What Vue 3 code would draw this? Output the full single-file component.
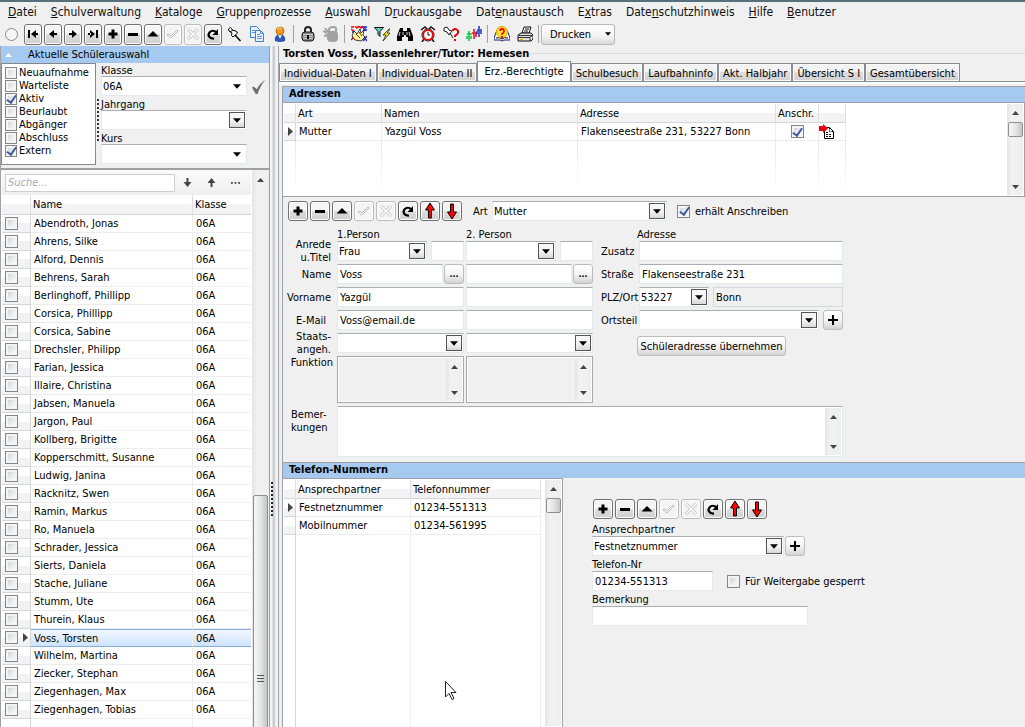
<script setup>
import { ref, reactive } from 'vue'

const menu = [
  ['', 'D', 'atei'], ['', 'S', 'chulverwaltung'], ['', 'K', 'ataloge'], ['', 'G', 'ruppenprozesse'],
  ['', 'A', 'uswahl'], ['D', 'r', 'uckausgabe'], ['Dat', 'e', 'naustausch'], ['E', 'x', 'tras'],
  ['Date', 'n', 'schutzhinweis'], ['', 'H', 'ilfe'], ['', 'B', 'enutzer']
]
const navigator = [
  ['first', 'Erster'], ['prev', 'Zurück'], ['next', 'Weiter'], ['last', 'Letzter'], ['plus', 'Neu'],
  ['minus', 'Löschen'], ['edit', 'Bearbeiten'], ['ok', 'Speichern'], ['cancel', 'Abbrechen'], ['reload', 'Aktualisieren']
]
const editor = [
  ['plus', 'Neu'], ['minus', 'Löschen'], ['edit', 'Bearbeiten'], ['ok', 'Speichern'], ['cancel', 'Abbrechen'],
  ['reload', 'Aktualisieren'], ['up', 'Nach oben'], ['down', 'Nach unten']
]
const tools = [
  [['pin', 'Anheften'], ['copy', 'Kopieren'], ['person', 'Person']],
  [['lock', 'Sperren'], ['unlock', 'Entsperren']],
  [['group', 'Gruppe'], ['filter', 'Filter'], ['binoculars', 'Suchen'], ['clock', 'Termine'], ['pinhelp', 'Vermerke'], ['people', 'Personen']],
  [['book', 'Hilfe'], ['printer', 'Drucker']]
]
const isOff = (id) => id === 'ok' || id === 'cancel'

const status = reactive([
  { name: 'Neuaufnahme', on: false }, { name: 'Warteliste', on: false }, { name: 'Aktiv', on: true },
  { name: 'Beurlaubt', on: false }, { name: 'Abgänger', on: false }, { name: 'Abschluss', on: false },
  { name: 'Extern', on: true }
])
const students = [
  'Abendroth, Jonas', 'Ahrens, Silke', 'Alford, Dennis', 'Behrens, Sarah', 'Berlinghoff, Phillipp',
  'Corsica, Phillipp', 'Corsica, Sabine', 'Drechsler, Philipp', 'Farian, Jessica', 'Illaire, Christina',
  'Jabsen, Manuela', 'Jargon, Paul', 'Kollberg, Brigitte', 'Kopperschmitt, Susanne', 'Ludwig, Janina',
  'Racknitz, Swen', 'Ramin, Markus', 'Ro, Manuela', 'Schrader, Jessica', 'Sierts, Daniela',
  'Stache, Juliane', 'Stumm, Ute', 'Thurein, Klaus', 'Voss, Torsten', 'Wilhelm, Martina',
  'Ziecker, Stephan', 'Ziegenhagen, Max', 'Ziegenhagen, Tobias'
]
const selected = ref('Voss, Torsten')
const tabs = [
  'Individual-Daten I', 'Individual-Daten II', 'Erz.-Berechtigte', 'Schulbesuch', 'Laufbahninfo',
  'Akt. Halbjahr', 'Übersicht S I', 'Gesamtübersicht'
]
const activeTab = ref('Erz.-Berechtigte')
const phones = [['Festnetznummer', '01234-551313'], ['Mobilnummer', '01234-561995']]
</script>

<template>
  <div class="app">
    <svg class="defs" aria-hidden="true">
      <symbol id="first" viewBox="0 0 14 14"><path d="M2 3h2v8H2zM10 3v8L5 7zM9 6h3v2H9z" /></symbol>
      <symbol id="prev" viewBox="0 0 14 14"><path d="M8 3v8L3 7zM8 6h3v2H8z" /></symbol>
      <symbol id="next" viewBox="0 0 14 14"><path d="M6 3v8l5-4zM3 6h3v2H3z" /></symbol>
      <symbol id="last" viewBox="0 0 14 14"><path d="M10 3h2v8h-2zM4 3v8l5-4zM2 6h3v2H2z" /></symbol>
      <symbol id="plus" viewBox="0 0 14 14"><path d="M5.5 2.5h3v3h3v3h-3v3h-3v-3h-3v-3h3z" /></symbol>
      <symbol id="minus" viewBox="0 0 14 14"><path d="M2 6h10v3H2z" /></symbol>
      <symbol id="edit" viewBox="0 0 14 14"><path d="M7 4l5.500 5.500h-11z" /></symbol>
      <symbol id="ok" viewBox="0 0 14 14"><path d="M1 8l2-1 2 2 6-6 1 1-7 7z" fill="#fff" stroke="#bdbdbd" /></symbol>
      <symbol id="cancel" viewBox="0 0 14 14"><path d="M2 2l10 10M12 2L2 12" stroke="#bdbdbd" stroke-width="3" /><path d="M2 2l10 10M12 2L2 12" stroke="#fff" stroke-width="1.500" /></symbol>
      <symbol id="reload" viewBox="0 0 14 14"><path d="M8 11.500C3 12 1.500 8 3.500 5.500c2-2.500 5-2 6.500-.5" fill="none" stroke="#000" stroke-width="2.200" /><path d="M12 2v6H6.500z" /></symbol>
      <symbol id="up" viewBox="0 0 14 18"><path d="M7 1l4.500 7H8.500v8h-3V8h-3z" fill="#f00" stroke="#000" /></symbol>
      <symbol id="down" viewBox="0 0 14 18"><path d="M7 17l4.500-7H8.500V2h-3v8h-3z" fill="#f00" stroke="#000" /></symbol>
      <symbol id="pin" viewBox="0 0 16 16"><path d="M9 9l5.500 6" stroke="#000" stroke-width="1.500" /><path d="M2.500 3l2-1.500 2.500 3 3 .5 1.500 2-4.500 4-1.500-1.500.5-2.500-3-2z" fill="#fff" stroke="#000" /><path d="M4 6l3-2" stroke="#000" /></symbol>
      <symbol id="copy" viewBox="0 0 16 16"><path d="M1.500.5h6l3 3v8h-9z" fill="#eaf3ff" stroke="#3f7fca" /><path d="M6.500 4.500h5l3 3v8h-8z" fill="#eaf3ff" stroke="#3f7fca" /><path d="M11.500 4.500v3h3M8 8.500h3M8 10.500h5M8 12.500h5M3 4.500h3M3 6.500h3" fill="none" stroke="#5794da" /></symbol>
      <symbol id="person" viewBox="0 0 16 16"><path d="M3 15c-1-4 2-7 5-7s6 3 5 7q-5 2-10 0z" fill="#2957b4" /><path d="M6 9h4l-2 4z" fill="#dcecff" /><circle cx="8" cy="5" r="4" fill="#f49b25" stroke="#c36d09" /><path d="M5 3q3-3 5 0" fill="none" stroke="#ffe18a" /></symbol>
      <symbol id="lock" viewBox="0 0 16 16"><path d="M5 8V4q0-3 3-3t3 3v4" fill="none" stroke="#222" stroke-width="2" /><rect x="2" y="6" width="12" height="9" rx="3" fill="#888" stroke="#111" /><path d="M3 8.500h10M3 10.500h10M3 12.500h10" stroke="#c9c9c9" /><path d="M8 9v4" stroke="#111" stroke-width="2" /></symbol>
      <symbol id="unlock" viewBox="0 0 16 16"><path d="M6 7V4q0-3 4-3t3 3v3" fill="none" stroke="#a2a2a2" stroke-width="2" /><rect x="4" y="5" width="11" height="11" rx="4" fill="#a2a2a2" /><path d="M0 5l4 2M1 10l4-1M2 2l3 4" stroke="#a2a2a2" stroke-width="2" /></symbol>
      <symbol id="group" viewBox="0 0 16 16"><path d="M0 1h3M4 0l2 2 2-2 2 2 2-2M0 3l3 2M0 14l3-3" fill="none" stroke="#f00" stroke-width="1.500" /><path d="M1 6h3M11 1h5M12 4h4M14 1v4M12 10l4 5M16 10l-4 5M1 11h2" stroke="#1d2bd8" stroke-width="1.500" /><path d="M3 5l3 3 3-5 1 4 3-3-1 5 2 2-4 4-6-1-3-4z" fill="#fff39a" stroke="#111" stroke-width=".8" /><path d="M5 8l4 4M8 6l3 4" stroke="#111" stroke-width=".8" /><path d="M10 0l3 3" stroke="#f00" /></symbol>
      <symbol id="filter" viewBox="0 0 16 16"><path d="M.5 1.500h9l-3.500 4v5l-2-2v-3z" fill="#5bd0c9" stroke="#111" /><path d="M15 3l-6 6h3l-3 6 7-8h-3l3-4z" fill="#ffec00" stroke="#222" stroke-width=".8" /></symbol>
      <symbol id="binoculars" viewBox="0 0 16 16"><path d="M3 2h3v3h4V2h3l3 8v5h-5v-4H9V9H7v2H5v4H0v-5z" /><path d="M3 6L2 10M12 6l1 4M6 6v3M10 6v3" stroke="#d8d8d8" /></symbol>
      <symbol id="clock" viewBox="0 0 16 16"><path d="M1 4l4-3 2 2M15 4l-4-3-2 2M4 13l-2 3M12 13l2 3" fill="none" stroke="#111" stroke-width="1.500" /><circle cx="8" cy="9" r="6" fill="#fff" stroke="#111" /><circle cx="8" cy="9" r="4.800" fill="none" stroke="#f00" stroke-width="1.800" /><path d="M8 6v3h2" fill="none" stroke="#111" /></symbol>
      <symbol id="pinhelp" viewBox="0 0 16 16"><path d="M1 2l3-1 2 3 3 1-3 4-2-3-3-1zM7 7l3 5" fill="#fff" stroke="#222" /><path d="M10 5q0-2 2-2t3 2-3 5v1M12 13v2" fill="none" stroke="#e40000" stroke-width="2" /></symbol>
      <symbol id="people" viewBox="0 0 16 16"><path d="M3 5v3M1 8h5M3 8v7M1 10v3M5 10v3" stroke="#00c53d" stroke-width="1.500" /><path d="M8 3v3M6 7h5M8 7v6M10 7v4" stroke="#f00" stroke-width="1.500" /><path d="M13 0v3M11 4h5M13 4v7M11 5v3M15 5v3" stroke="#1830c4" stroke-width="1.500" /></symbol>
      <symbol id="book" viewBox="0 0 16 16"><path d="M3 4L0 12v2h6l2 1 2-1h6v-2l-3-8z" fill="#fff" stroke="#16226f" /><path d="M2 12q4-1 6 1 2-2 6-1" fill="none" stroke="#111" /><circle cx="8" cy="6" r="5.500" fill="#ffe82a" stroke="#d9a400" /><path d="M6 5q0-2 2-2t2 2-2 3v1M8 10v2" fill="none" stroke="#f00" stroke-width="1.800" /></symbol>
      <symbol id="printer" viewBox="0 0 16 16"><path d="M5 7l2-6h7l-2 6z" fill="#fff" stroke="#111" /><path d="M8 3h4M7 5h4" stroke="#111" /><path d="M1 9l3-2h10l2 2v4l-2 2H1z" fill="#e1e1e1" stroke="#111" /><path d="M1 11.500h12V15M2 9.500h13M13 11l3-2" fill="none" stroke="#333" /><path d="M3 13.500h3" stroke="#e0a800" /></symbol>
      <symbol id="tri-up" viewBox="0 0 7 4"><path d="M3.500 0L7 4H0z" /></symbol>
      <symbol id="tri-down" viewBox="0 0 7 4"><path d="M0 0h7L3.500 4z" /></symbol>
      <symbol id="tri-right" viewBox="0 0 5 9"><path d="M0 0l5 4.500L0 9z" fill="#444" /></symbol>
    </svg>

    <nav class="menu" aria-label="Hauptmenü">
      <a v-for="m in menu" :key="m.join('')" href="#">{{ m[0] }}<u>{{ m[1] }}</u>{{ m[2] }}</a>
    </nav>

    <div class="toolbar">
      <span class="lamp"></span>
      <div class="nav-buttons">
        <button v-for="b in navigator" :key="b[0]" class="tool narrow" :class="{ off: isOff(b[0]) }" :disabled="isOff(b[0])" :aria-label="b[1]">
          <svg><use :href="'#' + b[0]" /></svg>
        </button>
      </div>
      <div v-for="(g, i) in tools" :key="i" class="tool-group">
        <button v-for="t in g" :key="t[0]" class="flat" :aria-label="t[1]"><svg><use :href="'#' + t[0]" /></svg></button>
      </div>
      <button class="print">Drucken <svg><use href="#tri-down" /></svg></button>
    </div>

    <div class="body">
      <aside class="side">
        <h2 class="side-title"><svg><use href="#tri-up" /></svg>Aktuelle Schülerauswahl</h2>
        <div class="filters">
          <div class="status">
            <label v-for="s in status" :key="s.name"><input v-model="s.on" type="checkbox">{{ s.name }}</label>
          </div>
          <div class="grip-bar"></div>
          <div class="choices">
            <label for="f-klasse">Klasse</label>
            <div class="choice-row">
              <div class="pick plain"><select id="f-klasse"><option>06A</option></select><svg><use href="#tri-down" /></svg></div>
              <svg class="check" viewBox="0 0 16 15"><path d="M1 8l2-1 3 3q4-7 9-10Q9 8 7 15H5z" /></svg>
            </div>
            <label for="f-jahr">Jahrgang</label>
            <div class="pick"><select id="f-jahr"><option></option></select><svg><use href="#tri-down" /></svg></div>
            <label for="f-kurs">Kurs</label>
            <div class="pick plain"><select id="f-kurs"><option></option></select><svg><use href="#tri-down" /></svg></div>
          </div>
        </div>
        <div class="list">
          <div class="list-main">
            <div class="search">
              <input type="text" placeholder="Suche..." aria-label="Suche">
              <button aria-label="Weitersuchen"><svg viewBox="0 0 8 9"><path d="M3 0h2v4h3L4 9 0 4h3z" /></svg></button>
              <button aria-label="Rückwärts suchen"><svg viewBox="0 0 8 9"><path d="M3 9h2V5h3L4 0 0 5h3z" /></svg></button>
              <button aria-label="Mehr"><svg viewBox="0 0 10 9"><path d="M0 4h2v2H0zM4 4h2v2H4zM8 4h2v2H8z" /></svg></button>
            </div>
            <table class="students">
              <colgroup><col class="c-check"><col><col class="c-class"></colgroup>
              <thead><tr><th></th><th>Name</th><th>Klasse</th></tr></thead>
              <tbody>
                <tr v-for="s in students" :key="s" :class="{ current: s === selected }" @click="selected = s">
                  <td class="mark"><div><input type="checkbox" :aria-label="s"><svg v-if="s === selected"><use href="#tri-right" /></svg></div></td>
                  <td>{{ s }}</td><td>06A</td>
                </tr>
                <tr class="rest"><td></td><td></td><td></td></tr>
              </tbody>
            </table>
          </div>
          <div class="scroll tall">
            <svg><use href="#tri-up" /></svg>
            <div class="travel"></div>
            <div class="thumb"><i></i><i></i><i></i></div>
          </div>
        </div>
      </aside>
      <div class="splitter"><span></span></div>

      <main class="main">
        <h1><span>Torsten Voss, Klassenlehrer/Tutor: Hemesen</span></h1>
        <div class="tabs" role="tablist">
          <button v-for="t in tabs" :key="t" role="tab" :aria-selected="t === activeTab" :class="{ active: t === activeTab }" @click="activeTab = t">{{ t }}</button>
        </div>
        <div class="page">
          <h3>Adressen</h3>
          <div class="grid-box">
            <table class="addresses">
              <colgroup><col class="a0"><col class="a1"><col class="a2"><col class="a3"><col class="a4"><col class="a5"></colgroup>
              <thead><tr><th></th><th>Art</th><th>Namen</th><th>Adresse</th><th>Anschr.</th><th></th></tr></thead>
              <tbody>
                <tr>
                  <td class="mark"><svg><use href="#tri-right" /></svg></td><td>Mutter</td><td>Yazgül Voss</td>
                  <td>Flakenseestraße 231, 53227 Bonn</td>
                  <td class="mid"><input type="checkbox" checked aria-label="Anschreiben"></td>
                  <td class="doc"><svg viewBox="0 0 16 15"><path d="M5.500 3.500h5l4 4v7h-9z" fill="#fff" stroke="#000" /><path d="M10.500 3.500v4h4M7 8.500h2M7 10.500h6M7 12.500h6" fill="none" stroke="#000" stroke-dasharray="2 1" /><path d="M0 2h4V0l5 4.500L4 9V7H0z" fill="#e8000b" /></svg></td>
                </tr>
                <tr class="fade"><td v-for="n in 6" :key="n"></td></tr>
              </tbody>
            </table>
            <div class="scroll"><svg><use href="#tri-up" /></svg><div class="thumb small"></div><svg class="end"><use href="#tri-down" /></svg></div>
          </div>

          <form class="details" @submit.prevent>
            <div class="detail-bar">
              <div class="edit-buttons">
                <button v-for="b in editor" :key="b[0]" type="button" class="tool" :class="{ off: isOff(b[0]) }" :disabled="isOff(b[0])" :aria-label="b[1]"><svg><use :href="'#' + b[0]" /></svg></button>
              </div>
              <label for="art">Art</label>
              <div class="pick art"><select id="art"><option>Mutter</option></select><svg><use href="#tri-down" /></svg></div>
              <label class="tick"><input type="checkbox" checked>erhält Anschreiben</label>
            </div>
            <div class="forms">
              <div class="persons">
                <span></span><span class="head">1.Person</span><span class="head">2. Person</span>
                <label for="anrede" class="two">Anrede<br>u.Titel</label>
                <div class="pair"><div class="pick"><select id="anrede"><option>Frau</option></select><svg><use href="#tri-down" /></svg></div><input class="title" type="text" aria-label="Titel 1. Person"></div>
                <div class="pair"><div class="pick"><select aria-label="Anrede 2. Person"><option></option></select><svg><use href="#tri-down" /></svg></div><input class="title" type="text" aria-label="Titel 2. Person"></div>
                <label for="name">Name</label>
                <div class="pair tight"><input id="name" type="text" value="Voss"><button type="button" class="soft dots">...</button></div>
                <div class="pair tight"><input type="text" aria-label="Name 2. Person"><button type="button" class="soft dots">...</button></div>
                <label for="vorname">Vorname</label>
                <input id="vorname" type="text" value="Yazgül"><input type="text" aria-label="Vorname 2. Person">
                <label for="mail" class="inset">E-Mail</label>
                <input id="mail" type="text" value="Voss@email.de"><input type="text" aria-label="E-Mail 2. Person">
                <label for="staat" class="two">Staats-<br>angeh.</label>
                <div class="pick"><select id="staat"><option></option></select><svg><use href="#tri-down" /></svg></div>
                <div class="pick"><select aria-label="Staatsangehörigkeit 2. Person"><option></option></select><svg><use href="#tri-down" /></svg></div>
                <label for="funktion" class="top">Funktion</label>
                <div class="area gray"><textarea id="funktion" readonly></textarea><div class="scroll"><svg><use href="#tri-up" /></svg><svg class="end"><use href="#tri-down" /></svg></div></div>
                <div class="area gray"><textarea readonly aria-label="Funktion 2. Person"></textarea><div class="scroll"><svg><use href="#tri-up" /></svg><svg class="end"><use href="#tri-down" /></svg></div></div>
              </div>
              <div class="address">
                <span></span><span class="head">Adresse</span>
                <label for="zusatz">Zusatz</label><input id="zusatz" type="text">
                <label for="strasse">Straße</label><input id="strasse" type="text" value="Flakenseestraße 231">
                <label for="plz">PLZ/Ort</label>
                <div class="pair"><div class="pick plz"><select id="plz"><option>53227</option></select><svg><use href="#tri-down" /></svg></div><input class="ro" type="text" value="Bonn" readonly aria-label="Ort"></div>
                <label for="ortsteil">Ortsteil</label>
                <div class="pair"><div class="pick"><select id="ortsteil"><option></option></select><svg><use href="#tri-down" /></svg></div><button type="button" class="soft add" aria-label="Ortsteil hinzufügen"><svg viewBox="0 0 10 10"><path d="M4 0h2v4h4v2H6v4H4V6H0V4h4z" /></svg></button></div>
                <span></span><div><button type="button" class="soft take">Schüleradresse übernehmen</button></div>
              </div>
            </div>
            <div class="remarks">
              <label for="bemerkungen">Bemer-<br>kungen</label>
              <div class="area"><textarea id="bemerkungen"></textarea><div class="scroll"><svg><use href="#tri-up" /></svg><svg class="end"><use href="#tri-down" /></svg></div></div>
            </div>
          </form>

          <h3>Telefon-Nummern</h3>
          <div class="phones">
            <div class="phone-grid">
              <table>
                <colgroup><col class="a0"><col class="p1"><col></colgroup>
                <thead><tr><th></th><th>Ansprechpartner</th><th>Telefonnummer</th></tr></thead>
                <tbody>
                  <tr v-for="(p, i) in phones" :key="p[0]"><td class="mark"><svg v-if="i === 0"><use href="#tri-right" /></svg></td><td>{{ p[0] }}</td><td>{{ p[1] }}</td></tr>
                  <tr class="rest"><td></td><td></td><td></td></tr>
                </tbody>
              </table>
              <div class="scroll"><svg><use href="#tri-up" /></svg><div class="thumb small"></div></div>
            </div>
            <form class="phone-form" @submit.prevent>
              <div class="edit-buttons">
                <button v-for="b in editor" :key="b[0]" type="button" class="tool" :class="{ off: isOff(b[0]) }" :disabled="isOff(b[0])" :aria-label="b[1]"><svg><use :href="'#' + b[0]" /></svg></button>
              </div>
              <label for="partner">Ansprechpartner</label>
              <div class="pair partner"><div class="pick"><select id="partner"><option>Festnetznummer</option></select><svg><use href="#tri-down" /></svg></div><button type="button" class="soft add" aria-label="Ansprechpartner hinzufügen"><svg viewBox="0 0 10 10"><path d="M4 0h2v4h4v2H6v4H4V6H0V4h4z" /></svg></button></div>
              <label for="tel">Telefon-Nr</label>
              <div class="tel-row"><input id="tel" type="text" value="01234-551313"><label class="tick"><input type="checkbox">Für Weitergabe gesperrt</label></div>
              <label for="bem">Bemerkung</label>
              <input id="bem" type="text">
            </form>
          </div>
        </div>
      </main>
    </div>
    <svg class="pointer" viewBox="0 0 12 19"><path d="M.5.5v15.500l3.500-3.500 3 6 2-1-3-6h5z" fill="#fff" stroke="#222" /></svg>
  </div>
</template>

<style>
html, body, #app { height: 100%; }
body { overflow: hidden; background: #f0f0f0; }
</style>

<style scoped>
* { box-sizing: border-box; }
.app { height: 100vh; display: flex; flex-direction: column; background: #f0f0f0; color: #000; border-top: 2px solid #58707c; font: 11px/13px Tahoma, "DejaVu Sans Condensed", "Noto Sans", sans-serif; overflow: hidden; }
.defs { position: absolute; width: 0; height: 0; }
input, select, button, textarea { font: inherit; color: inherit; margin: 0; border-radius: 0; }
button { padding: 0; }
h1, h2, h3 { margin: 0; font-size: 11px; }
svg { flex: none; }

.menu { height: 20px; display: flex; align-items: center; font-size: 12px; padding-left: 1px; }
.menu a { padding: 0 7px; color: #111; text-decoration: none; white-space: nowrap; }

.toolbar { height: 24px; display: flex; align-items: center; padding-left: 5px; }
.lamp { width: 13px; height: 13px; border: 1px solid #888; border-radius: 50%; background: #f6f6f6; margin-right: 6px; }
.nav-buttons { display: flex; gap: 2px; }
.tool { width: 20px; height: 20px; border: 1px solid #707070; border-radius: 3px; background: linear-gradient(#f4f4f4 50%, #dcdcdc 50%, #d0d0d0); box-shadow: inset 0 0 0 1px #fff; display: flex; align-items: center; justify-content: center; }
.tool.narrow { width: 18px; height: 21px; }
.tool svg { width: 14px; height: 14px; }
.edit-buttons .tool:nth-child(n+7) svg { height: 18px; }
.tool.off { border-color: #bbb; background: #f4f4f4; }
.tool-group { display: flex; padding: 0 2px; border-right: 1px solid #a0a0a0; height: 18px; align-items: center; }
.nav-buttons + .tool-group { padding-left: 0; }
.flat { width: 23px; height: 20px; border: 0; background: none; display: flex; align-items: center; justify-content: center; }
.flat svg { width: 16px; height: 16px; }
.print { height: 21px; width: 74px; margin-left: 2px; border: 1px solid #b8b8b8; border-radius: 3px; background: linear-gradient(#fff, #f3f3f3 60%, #d8d8d8); display: flex; align-items: center; justify-content: space-between; padding: 0 3px 0 8px; }
.print svg { width: 6px; height: 4px; }

.body { flex: 1; min-height: 0; display: flex; }
.side { width: 270px; flex: none; border-left: 1px solid #a0a0a8; border-right: 1px solid #9c9ca4; display: flex; flex-direction: column; }
.side-title { background: #a6c9ef; height: 17px; display: flex; align-items: center; font-weight: normal; gap: 16px; padding-left: 4px; }
.side-title svg { width: 7px; height: 4px; fill: #fff; }
.filters { display: flex; height: 107px; padding-bottom: 3px; border-bottom: 2px solid #a0a0a0; }
.status { width: 95px; border: 1px solid #828790; background: #fff; padding: 2px 3px; }
.status label { display: flex; height: 13px; align-items: center; gap: 2px; white-space: nowrap; }
input[type="checkbox"] { appearance: none; flex: none; width: 13px; height: 13px; border: 1px solid #858585; background: linear-gradient(135deg, #c9cdd2, #f8f8f8 80%); box-shadow: inset 0 0 0 2px #f4f4f4; display: grid; place-items: center; }
input[type="checkbox"]:checked::after { content: ""; width: 4px; height: 8px; border: solid #3f5a9e; border-width: 0 2px 2px 0; transform: rotate(35deg) translateY(-1px); }
.status input[type="checkbox"] { width: 12px; height: 12px; }
.grip-bar { width: 4px; border-left: 2px dotted #333; margin: 36px 0 24px 1px; }
.choices { flex: 1; padding-right: 3px; }
.choices > label { display: block; height: 13px; line-height: 15px; }
.choices .pick { width: 146px; height: 20px; margin-bottom: 1px; }
.choice-row { display: flex; align-items: center; gap: 4px; }
.check { width: 15px; height: 14px; fill: #6e6e6e; }

.pick { position: relative; flex: 1; min-width: 0; height: 20px; }
.pick select { appearance: none; width: 100%; height: 100%; display: block; padding: 0 20px 0 1px; border: 1px solid #e3e9ef; border-top-color: #abadb3; background: #fff; outline: 0; }
.pick svg { position: absolute; right: 2px; top: 2px; width: 16px; height: 16px; border: 1px solid #555; background: linear-gradient(#f6f6f6 50%, #d8d8d8); padding: 5px 3px 4px; pointer-events: none; }
.pick.plain svg { border-color: transparent; background: none; }
input[type="text"] { height: 20px; width: 100%; min-width: 0; padding: 0 2px; border: 1px solid #e3e9ef; border-top-color: #abadb3; background: #fff; outline: 0; }
input[type="text"].ro { background: #f0f0f0; border-color: #d4d8de; }

.list { flex: 1; min-height: 0; display: flex; overflow: hidden; }
.list-main { flex: 1; background: #fff; padding: 0 1px; }
.search { height: 26px; display: flex; align-items: center; background: linear-gradient(#fbfbfb, #eee); padding-left: 3px; border-bottom: 1px solid #e0e0e0; }
.search input[type="text"] { width: 170px; height: 18px; border: 1px solid #cfcfcf; }
.search input::placeholder { color: #aaa; font-style: italic; opacity: 1; }
.search button { border: 0; background: none; width: 24px; height: 18px; display: grid; place-items: center; }
.search svg { width: 9px; height: 9px; fill: #444; }

table { border-collapse: separate; border-spacing: 0; table-layout: fixed; width: 100%; background: #fff; }
th { height: 19px; padding: 0 2px; text-align: left; font-weight: normal; background: linear-gradient(#fff 50%, #f3f3f5 50%); border-bottom: 1px solid #d5d5d5; border-right: 1px solid #dedfe1; white-space: nowrap; }
td { height: 18px; padding: 0 3px; border-bottom: 1px solid #ededed; border-right: 1px solid #ededed; white-space: nowrap; }
td:first-child { background: linear-gradient(#fff 50%, #f1f2f4 50%); border-right-color: #d5d5d5; border-bottom-color: #d5d5d5; padding: 0; }
.students th:last-child, .students td:last-child { border-right: 0; }
.students { margin-top: -1px; }
.students th { height: 20px; }
.c-check { width: 29px; }
.c-class { width: 58px; }
.students .mark div { display: flex; align-items: center; gap: 5px; padding-left: 3px; }
.mark svg { width: 5px; height: 9px; display: block; }
.current td:not(:first-child) { background: linear-gradient(#f1f7ff, #cfe3fc); border-top: 1px solid #84acdd; border-bottom-color: #84acdd; }
.rest td { height: 400px; border-bottom: 0; background: #fff; }

.scroll { width: 16px; flex: none; background: linear-gradient(90deg, #e4e4e4, #f2f2f2 30%, #eee); display: flex; flex-direction: column; align-items: center; padding-top: 7px; }
.scroll svg { width: 7px; height: 4px; fill: #444; }
.scroll .end { margin: auto 0 6px; }
.scroll.tall { width: 17px; padding-top: 8px; }
.travel { height: 313px; flex: none; }
.thumb { width: 15px; height: 368px; flex: none; border: 1px solid #8f8f8f; border-radius: 2px; background: linear-gradient(90deg, #f6f6f6, #e5e5e5 50%, #c2c4c8); display: flex; flex-direction: column; align-items: center; justify-content: center; gap: 1px; }
.thumb i { width: 7px; height: 2px; border-top: 1px solid #555; }
.thumb.small { height: 15px; margin-top: 7px; }

.splitter { width: 9px; flex: none; border-right: 1px solid #a0a0a8; background: linear-gradient(90deg, #f4f4f4 20%, #c4c6ca 45%, #f4f4f4 80%); display: flex; align-items: center; }
.splitter span { height: 34px; border-left: 2px dotted #222; margin: 225px 0 0 1px; }

.main { flex: 1; min-width: 0; display: flex; flex-direction: column; }
h1 { height: 15px; display: flex; align-items: center; gap: 1px; padding-left: 4px; white-space: nowrap; }
h1::after { content: ""; flex: 1; border-top: 1px solid #d5dfe5; }
.tabs { height: 20px; display: flex; align-items: flex-end; }
.tabs button { height: 18px; padding: 1px 4px 0; border: 1px solid #898c95; border-bottom: 0; background: linear-gradient(#f3f3f3 50%, #dedede 50%, #d0d0d0); box-shadow: inset 0 0 0 1px #fafafa; white-space: nowrap; }
.tabs .active { height: 21px; margin: 0 0 -1px; padding: 0 6px 2px; background: #fff; }
.page { flex: 1; min-height: 0; border-top: 1px solid #898c95; box-shadow: inset 0 2px #fff; padding: 4px 0 0 3px; display: flex; flex-direction: column; }
h3 { height: 16px; flex: none; background: #a6c9ef; border-top: 1px solid #a0a0a0; border-left: 1px solid #a0a0a0; padding: 0 6px; }
.grid-box { display: flex; justify-content: space-between; height: 95px; border: 1px solid #a0a0a8; background: #fff; padding: 1px; }
.addresses { width: 562px; height: 91px; }
.a0 { width: 12px; } .a1 { width: 86px; } .a2 { width: 196px; } .a3 { width: 198px; } .a4 { width: 43px; } .a5 { width: 27px; }
.p1 { width: 115px; }
td.mark svg { margin-left: 4px; }
.students td.mark svg { margin: 0; }
.mid input { margin: 0 auto; }
td.doc { padding: 0; }
.doc svg { display: block; width: 16px; height: 15px; }
.fade td, .fade td:first-child { height: 53px; border: 0; background: linear-gradient(#e8e8e8, #fff) right / 1px 100% no-repeat; }

.details { flex: none; border-left: 1px solid #a0a0a8; padding: 4px 0 5px 1px; }
.detail-bar { display: flex; align-items: center; height: 20px; }
.edit-buttons { display: flex; gap: 2px; }
.detail-bar .edit-buttons { margin: 0 11px 0 4px; }
.detail-bar > label:not(.tick) { width: 19px; }
.pick.art { flex: none; width: 175px; margin-right: 10px; }
.tick { display: flex; align-items: center; gap: 5px; white-space: nowrap; }
.forms { display: flex; gap: 8px; margin-top: 9px; }
.persons { display: grid; grid-template-columns: 51px 127px 127px; grid-template-rows: 8px 20px 20px 20px 20px 20px 47px; gap: 3px 2px; align-items: center; }
.persons > label { text-align: right; padding-right: 4px; }
.persons .two { margin: -3px 0; }
.persons .inset { padding-right: 9px; }
.persons .top { align-self: start; padding-right: 2px; }
.pair { display: flex; gap: 4px; min-width: 0; }
.pair.tight { gap: 1px; }
input[type="text"].title { width: 33px; }
.soft { border: 1px solid #bcbcbc; border-radius: 3px; background: linear-gradient(#fff, #f4f4f4 50%, #d4d4d4); }
.dots { width: 20px; flex: none; font-size: 9px; font-weight: bold; line-height: 12px; }
.add { width: 20px; flex: none; display: grid; place-items: center; }
.add svg { width: 10px; height: 10px; }
.area { display: flex; height: 100%; border: 1px solid #e3e9ef; border-top-color: #abadb3; background: #fff; padding: 1px; }
.area textarea { flex: 1; min-width: 0; border: 0; background: none; resize: none; outline: 0; padding: 1px 2px; }
.area.gray { border: 1px solid #a7a8ad; background: #f0f0f0; box-shadow: inset 0 0 0 1px #fff; }
.address { display: grid; grid-template-columns: 38px 204px; grid-auto-rows: 20px; grid-template-rows: 8px; gap: 3px 0; align-items: center; }
.address > .head { margin-left: -2px; }
.address > label { white-space: nowrap; }
.pick.plz { flex: none; width: 70px; }
.take { height: 20px; margin: 6px 0 0 -2px; width: 149px; white-space: nowrap; }
.remarks { display: flex; height: 51px; margin-top: 3px; }
.remarks label { width: 53px; padding: 2px 0 0 7px; }
.remarks .area { width: 506px; }

.phones { flex: 1; min-height: 0; display: flex; }
.phone-grid { width: 281px; border: solid #a0a0a8; border-width: 1px 1px 0; background: #fff; display: flex; gap: 4px; padding: 1px; overflow: hidden; }
.phone-grid table { flex: 1; align-self: flex-start; }
.phone-form { flex: 1; padding: 21px 0 0 29px; }
.phone-form > .edit-buttons { margin: 0 0 5px 1px; }
.phone-form > label { display: block; line-height: 12px; }
.phone-form > .pair, .tel-row { margin-bottom: 3px; }
.partner { width: 213px; gap: 1px; }
.tel-row { display: flex; gap: 14px; }
#tel { width: 121px; }
#bem { width: 216px; }
.pointer { position: absolute; left: 445px; top: 681px; width: 12px; height: 19px; }
</style>
